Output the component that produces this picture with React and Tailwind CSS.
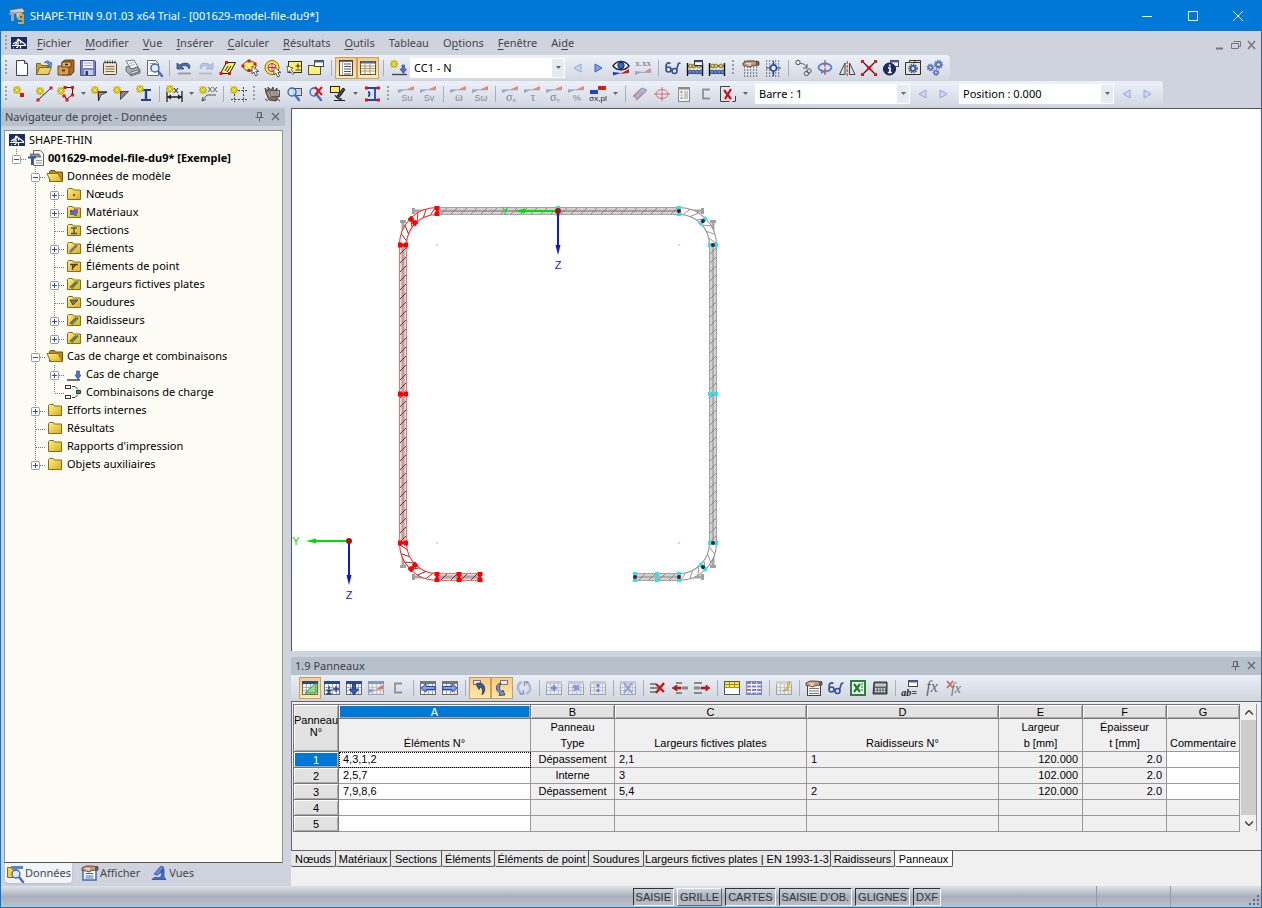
// src/App.jsx
import React, { useState } from 'react';
import clsx from 'clsx';

/* ---------- small drawing helpers (all icons live in a 20x20 box) ---------- */

const Star = ({ x = 5, y = 5 }) => (
    <g transform={`translate(${x} ${y})`} fill="none">
        <path d="M0-4V4M-4 0H4M-3-3L3 3M-3 3L3-3" stroke="#a39612" strokeWidth="1.8" />
        <path d="M0-4V4M-4 0H4M-3-3L3 3M-3 3L3-3" stroke="#fff03a" strokeWidth="0.9" />
    </g>
);

const RedDot = ({ x, y, s = 3 }) => <rect x={x - s / 2} y={y - s / 2} width={s} height={s} fill="#e01515" />;

const Cursor = ({ x = 10, y = 8 }) => (
    <path d={`M${x} ${y}v8l2-2 1.6 4 2-1-1.8-3.6h3z`} fill="#fff" stroke="#333" strokeWidth="0.8" />
);

const Lens = ({ x = 9, y = 8 }) => (
    <g>
        <path d={`M${x + 3} ${y + 3}l4 5`} stroke="#4a6fb5" strokeWidth="2.500" strokeLinecap="round" />
        <circle cx={x} cy={y} r="4" fill="#d5e6fa" fillOpacity="0.8" stroke="#3a62b0" strokeWidth="1.3" />
    </g>
);

const Wedge = () => (
    <g opacity="0.7">
        <path d="M2 9V5.500h8z" fill="#6f8fd0" />
        <path d="M18 2v4H9z" fill="#e0605a" />
        <path d="M2 6h16" stroke="#999" strokeWidth="0.7" />
    </g>
);

const ResultMark = ({ text, serif }) => (
    <g>
        <Wedge />
        <text
            x="11"
            y="17"
            textAnchor="middle"
            fontSize={serif ? 12 : 9}
            fill="#85898f"
            fontFamily={serif ? 'Liberation Serif, serif' : 'Liberation Sans, sans-serif'}
        >
            {text}
        </text>
    </g>
);

const Sheet = ({ head = '#2b4a80', soft }) => (
    <g opacity={soft ? 0.5 : 1}>
        <rect x="2.500" y="3.500" width="15" height="13" fill="#f4f4f4" stroke="#6a6a6a" />
        <rect x="2" y="3" width="16" height="3" fill={head} />
        <path d="M3 9.500h14M3 12.500h14M6.500 6v10M10.500 6v10M14.500 6v10" stroke="#9a9da5" strokeWidth="0.8" />
    </g>
);

const DotGrid = () => (
    <path
        d="M3 3h15M3 6h15M3 9h15M3 12h15M3 15h15M3 18h15"
        stroke="#333"
        strokeWidth="1.2"
        strokeDasharray="1.200 1.800"
    />
);

const Gear = ({ x, y, r, fill = '#5b7fc4' }) => (
    <g>
        <circle cx={x} cy={y} r={r} fill="none" stroke={fill} strokeWidth="1.8" strokeDasharray="1.300 1" />
        <circle cx={x} cy={y} r={r - 0.8} fill={fill} stroke="#2f4e8f" strokeWidth="0.6" />
        <circle cx={x} cy={y} r={r * 0.35} fill="#eef" />
    </g>
);

const Abacus = () => (
    <g>
        <path d="M2.500 5v13M17.500 5v13" stroke="#111" strokeWidth="1.4" />
        <path d="M2 8h16M2 15h16" stroke="#111" />
        <g fill="#e5c74d" stroke="#554400" strokeWidth="0.6">
            <circle cx="5.500" cy="8" r="1.900" />
            <circle cx="9" cy="8" r="1.900" />
            <circle cx="14" cy="8" r="1.900" />
        </g>
        <g fill="#6787cf" stroke="#1b2f66" strokeWidth="0.6">
            <circle cx="5" cy="14" r="1.900" />
            <circle cx="8.500" cy="14" r="1.900" />
            <circle cx="12" cy="14" r="1.900" />
            <circle cx="15.500" cy="14" r="1.900" />
        </g>
    </g>
);

const Glasses = () => (
    <g fill="none" stroke="#34508f" strokeWidth="1.6">
        <circle cx="5.500" cy="11.500" r="2.500" />
        <circle cx="11.500" cy="13" r="2.500" />
        <path d="M8 12h1.500M3.500 10C2 6 5 4 7.500 5.500M13.500 11.500L15.500 5.500l2-.5" />
    </g>
);

const Hand = ({ y = 0 }) => (
    <g transform={`translate(0 ${y})`}>
        <path d="M2 4l4-2 6 0 6 1v3l-6 .500-3 1.500-3-1-4-.500z" fill="#c99a75" stroke="#4a3324" strokeWidth="0.8" />
        <path d="M15 2h3v4.500h-3z" fill="#5a5a5a" />
        <path d="M5 4.500h5M6 6h4" stroke="#fbe3cf" />
    </g>
);

const Arrow = ({ left, soft }) => (
    <path
        d={left ? 'M14 6v8L7 10z' : 'M6 6v8l7-4z'}
        fill={soft ? '#c9d8f5' : '#7ba3e8'}
        stroke={soft ? '#93a8d6' : '#3d64b8'}
    />
);

const Section = () => (
    <path d="M14 5.500H7v9h7" fill="none" stroke="#8f9298" strokeWidth="1.800" />
);

const Logo = () => (
    <g>
        <rect x="2" y="4" width="16" height="12" fill="#1b2a6b" />
        <path d="M3 12.500h14M6.500 12.500L9 6v8M9 6l8 6M4 15h1M7 14.500h2M11.500 13v2.500M11.500 8.500v2M4 11l3-2" stroke="#fff" strokeWidth="1.200" fill="none" />
    </g>
);

const Plus = ({ x, y, r = 3 }) => (
    <path d={`M${x - r} ${y}h${2 * r}M${x} ${y - r}v${2 * r}`} stroke="#6f8fd8" strokeWidth="2.400" />
);

const icons = {
    logo: <Logo />,
    new: (
        <g>
            <path d="M4.500 2.500h8l3 3v12h-11z" fill="#fff" stroke="#444" />
            <path d="M12.500 2.500v3h3" fill="#ddd" stroke="#444" />
        </g>
    ),
    open: (
        <g>
            <path d="M2.500 16.500v-11h4l1.500 2h7v9z" fill="#c9a32c" stroke="#6b5512" strokeWidth="0.800" />
            <path d="M2.500 16.500l3-7h12l-3 7z" fill="#e8cf6a" stroke="#6b5512" strokeWidth="0.800" />
            <path d="M10 5c2-3 5-3 6 0l1.500-1v4.500h-4.500L14.500 7C14 5 12 4 10 5z" fill="#5b8bd8" stroke="#2a4f94" strokeWidth="0.5" />
        </g>
    ),
    archive: (
        <g stroke="#4b2f0e" strokeWidth="0.8">
            <path d="M6 4l3-2h9v12l-3 3H6z" fill="#a96c28" />
            <path d="M2 8h11v9H2z" fill="#d99b44" />
            <path d="M6 4h9v5H6z" fill="#e6b162" />
            <path d="M6 12.500h3M9 6.500h3" stroke="#3a2206" strokeWidth="1.5" />
        </g>
    ),
    save: (
        <g>
            <path d="M2.500 2.500h14l1 1v14h-15z" fill="#7a80c0" stroke="#4c5090" />
            <path d="M5 3h10v7H5z" fill="#f3f3f8" />
            <path d="M6 5h8M6 7.500h8" stroke="#aab" />
            <path d="M6 12h9v5H6z" fill="#c8ccd8" />
            <path d="M7.500 13h2.500v4H7.500z" fill="#333a66" />
        </g>
    ),
    notes: (
        <g>
            <rect x="3.500" y="4.500" width="13" height="12" rx="1" fill="#f3e6cf" stroke="#5a4a35" />
            <path d="M5.500 8.500h9M5.500 11h9M5.500 13.500h9" stroke="#7b6a52" />
            <path d="M5 2.500v3M7.500 2.500v3M10 2.500v3M12.500 2.500v3M15 2.500v3" stroke="#444" />
        </g>
    ),
    print: (
        <g stroke="#555" strokeWidth="0.8">
            <path d="M4 3l8-1 4 7-7 2z" fill="#fff" />
            <path d="M4 9l3-1 2 3 7-2 2 3v3l-9 3-5-5z" fill="#a9adbb" />
            <path d="M9 14l8-2.500v2L9 16.500z" fill="#dfe3f5" />
            <path d="M7 5.500l5-1M8 7.500l5-1" stroke="#7b8ed0" />
        </g>
    ),
    preview: (
        <g>
            <path d="M3.500 2.500h8l3 3v12h-11z" fill="#fff" stroke="#666" />
            <path d="M5.500 5.500h5M5.500 8h2M5.500 10.500h2M5.500 13h2" stroke="#999" />
            <Lens x={11} y={10} />
        </g>
    ),
    undo: (
        <g>
            <path d="M3 5v6h7L7.500 8.500C11 6.500 14 8 15 11c3-4-2-8.500-9.500-4z" fill="#4a6fb5" stroke="#20365f" strokeWidth="0.7" />
            <path d="M4 15.500h13" stroke="#9aa1ad" strokeWidth="2" />
        </g>
    ),
    redo: (
        <g opacity="0.7">
            <path d="M17 5v6h-7l2.500-2.500C9 6.500 6 8 5 11c-3-4 2-8.500 9.500-4z" fill="#a9bce0" stroke="#7387ad" strokeWidth="0.7" />
            <path d="M3 15.500h13" stroke="#aab0bb" strokeWidth="2" />
        </g>
    ),
    selPara: (
        <g>
            <path d="M8.500 4.500h9l-6 11h-9z" fill="#ffee66" stroke="#222" />
            <RedDot x={8.5} y={4.5} />
            <RedDot x={3} y={15.5} />
            <RedDot x={11.5} y={15.5} />
            <path d="M10 8l-3 5M13 8l-4 6" stroke="#222" />
        </g>
    ),
    selLasso: (
        <g>
            <ellipse cx="9.500" cy="8" rx="6.500" ry="5" fill="#ffee66" stroke="#555" />
            <RedDot x={3} y={8} />
            <RedDot x={9} y={3} />
            <RedDot x={15} y={6} />
            <RedDot x={9} y={12.5} />
            <Cursor x={12} y={8} />
        </g>
    ),
    selCircle: (
        <g>
            <circle cx="10" cy="9.500" r="7" fill="#ffe84a" stroke="#807000" />
            <circle cx="10" cy="9.500" r="4" fill="#fff" stroke="#d02020" />
            <path d="M10 6v7M6.500 9.500h7" stroke="#d02020" />
            <Cursor x={12} y={9} />
        </g>
    ),
    selPlus: (
        <g>
            <rect x="4.500" y="3.500" width="13" height="11" fill="#ffee66" stroke="#333" />
            <path d="M11.500 8h5M14 5.500v5M11.500 12h5" stroke="#333" />
            <path d="M3 8l6 2-2 1.500 3 4-1.500 1-3-4L4 15z" fill="#fff" stroke="#444" strokeWidth="0.8" />
        </g>
    ),
    windowNew: (
        <g>
            <rect x="2.500" y="7.500" width="12" height="9" fill="#ffee77" stroke="#555" />
            <rect x="8.500" y="2.500" width="9" height="6" fill="#fff" stroke="#444" />
            <path d="M8 3.500h10" stroke="#4b6390" strokeWidth="2" />
        </g>
    ),
    navPanel: (
        <g>
            <rect x="3.500" y="2.500" width="13" height="15" fill="#fff" stroke="#444" />
            <path d="M4 3h12" stroke="#444" strokeWidth="1.500" />
            <path d="M6.500 3v14" stroke="#888" strokeWidth="0.800" />
            <path d="M8 6h7M8 8.500h7M8 11h7M8 13.500h7M8 16h7" stroke="#555" />
        </g>
    ),
    tablePanel: (
        <g>
            <rect x="2.500" y="3.500" width="15" height="13" fill="#fffdf4" stroke="#555" />
            <path d="M3 4.500h14" stroke="#46669c" strokeWidth="2" />
            <path d="M3 8h14M3 10.500h14M3 13h14M7 6v10M12 6v10" stroke="#a08a5a" strokeWidth="0.9" />
        </g>
    ),
    loadNew: (
        <g>
            <Star x={6} y={6} />
            <path d="M14 7v4h-2l3.500 4.500 3-4.500h-2V7z" fill="#4a74cc" stroke="#2a4688" strokeWidth="0.6" />
            <path d="M4 16.500h15" stroke="#444" strokeWidth="1.400" />
        </g>
    ),
    prev: <Arrow left soft />,
    next: <Arrow />,
    nextSoft: <Arrow soft />,
    eye: (
        <g>
            <path d="M2 8c4-6 12-6 16 0-4 5-12 5-16 0z" fill="#fff" stroke="#1b2b55" strokeWidth="1.500" />
            <circle cx="10" cy="7.500" r="3.200" fill="#3e68b8" stroke="#132452" />
            <path d="M2 17.500v-3.500l8 1z" fill="#1c3fc4" />
            <path d="M18 11v4l-9 1z" fill="#d81414" />
        </g>
    ),
    values: (
        <g>
            <text x="10" y="8" textAnchor="middle" fontSize="9" fill="#666" fontFamily="Liberation Serif, serif">
                x.xx
            </text>
            <path d="M2 17v-4l8 1z" fill="#8aa5dd" />
            <path d="M18 10v4l-9 1z" fill="#e58c88" />
            <path d="M2 14.500h16" stroke="#aaa" />
        </g>
    ),
    glasses: <Glasses />,
    abacusDoc: (
        <g>
            <Abacus />
            <rect x="9.500" y="2.500" width="8" height="5" fill="#fff" stroke="#333" />
            <path d="M9.500 3.500h8" stroke="#3557a0" strokeWidth="1.500" />
        </g>
    ),
    abacus: <Abacus />,
    gridHand: (
        <g>
            <DotGrid />
            <Hand y={1} />
        </g>
    ),
    gridSnap: (
        <g>
            <DotGrid />
            <path d="M10.500 3v15M3 10h15" stroke="#2344a8" strokeWidth="1.200" />
            <circle cx="10.500" cy="10" r="3" fill="#e6eefc" stroke="#2344a8" strokeWidth="1.500" />
        </g>
    ),
    copyMove: (
        <g fill="none" stroke="#555">
            <circle cx="5" cy="4.500" r="2.200" />
            <path d="M7.500 5.500c3 0 5 1 6 4M14 6v4h-4" />
            <circle cx="16" cy="13" r="2.200" />
            <circle cx="13.500" cy="15.500" r="2.200" />
        </g>
    ),
    rotate: (
        <g fill="none">
            <ellipse cx="10" cy="9.500" rx="6.500" ry="4" stroke="#5a82cc" strokeWidth="1.800" />
            <path d="M10 2v16" stroke="#c02020" strokeDasharray="3 1" />
            <path d="M6 16v-5l4 2.500z" fill="#5a82cc" />
        </g>
    ),
    mirror: (
        <g fill="none" stroke="#444">
            <path d="M8 5V16.500H2.500z" />
            <path d="M12.500 5V16.500H18z" />
            <path d="M10.200 3v15" stroke="#d02020" strokeDasharray="3 1" />
        </g>
    ),
    divide: (
        <g>
            <path d="M3 3l14 14M17 3L3 17" stroke="#222" strokeWidth="1.200" />
            <path d="M7 7l6 6M13 7l-6 6" stroke="#d01515" strokeWidth="1.500" />
            <RedDot x={3.5} y={3.5} />
            <RedDot x={16.5} y={3.5} />
            <RedDot x={3.5} y={16.5} />
            <RedDot x={16.5} y={16.5} />
            <RedDot x={10} y={10} s={4} />
        </g>
    ),
    info: (
        <g>
            <rect x="9.500" y="2.500" width="8" height="6" fill="#fff" stroke="#444" />
            <path d="M9 3.500h9" stroke="#4b6390" strokeWidth="2" />
            <circle cx="8.500" cy="11" r="6" fill="#1c2c66" stroke="#0e1840" />
            <path d="M8.700 6.500v2M7 10h2v4.500M6.800 14.500h4" stroke="#fff" strokeWidth="1.700" />
        </g>
    ),
    options: (
        <g>
            <path d="M2.500 16.500v-12h4v-2h11v14z" fill="#efe3cc" stroke="#333" />
            <path d="M7 4.500h10M12 2.500v2" stroke="#333" />
            <Gear x={10} y={10.5} r={4} fill="#3d62a8" />
        </g>
    ),
    gears: (
        <g>
            <Gear x={5.5} y={9.5} r={3} />
            <Gear x={13.5} y={6.5} r={3.8} />
            <Gear x={11} y={14.5} r={2.6} />
        </g>
    ),
    nodeNew: (
        <g>
            <Star x={5} y={6} />
            <RedDot x={10} y={11} s={4} />
        </g>
    ),
    lineNew: (
        <g>
            <path d="M4 16L17 4" stroke="#222" />
            <Star x={6} y={7} />
            <RedDot x={17} y={4} />
            <RedDot x={4} y={16} />
        </g>
    ),
    polyNew: (
        <g>
            <path d="M8 3.500h8.500v7l-6 5-2-4" stroke="#222" fill="none" />
            <Star x={5} y={7} />
            <RedDot x={9} y={3.5} />
            <RedDot x={16.5} y={3.5} />
            <RedDot x={16.5} y={11} />
            <RedDot x={11} y={16} />
            <RedDot x={8} y={12} />
        </g>
    ),
    weldNew: (
        <g>
            <path d="M8 8h9l-6 3-2.500 6z" fill="#999" stroke="#333" strokeWidth="0.800" />
            <path d="M5 8h12M8.500 8v9" stroke="#222" />
            <Star x={5} y={6} />
            <RedDot x={8.5} y={8} s={2} />
        </g>
    ),
    pointNew: (
        <g>
            <path d="M8.500 7.500h8l-8 8z" fill="#888" stroke="#333" strokeWidth="0.800" />
            <Star x={5} y={6} />
            <RedDot x={9} y={8} s={2} />
        </g>
    ),
    sectionNew: (
        <g>
            <path d="M7 6h10M7 16h10" stroke="#2140a0" strokeWidth="2" />
            <path d="M12 6v10" stroke="#2140a0" strokeWidth="2.400" />
            <Star x={6} y={5} />
        </g>
    ),
    dimNew: (
        <g>
            <path d="M3 7v11M18 7v11M3 13h15" stroke="#222" strokeWidth="1.300" />
            <path d="M3 13l4-2.500v5zM18 13l-4-2.500v5z" fill="#222" />
            <path d="M10 4l4 5M14 4l-4 5" stroke="#222" />
            <Star x={6} y={5} />
        </g>
    ),
    commentNew: (
        <g>
            <path d="M4 17l5-6h9M4 17l1-4M4 17l4-1.500" stroke="#555" fill="none" />
            <path d="M10 3l4 5M14 3l-4 5M15 3l4 5M19 3l-4 5" stroke="#666" />
            <Star x={5} y={6} />
        </g>
    ),
    guideNew: (
        <g>
            <path d="M6.500 3v15M15.500 3v15M3 6.500h16M3 15.500h16" stroke="#333" strokeDasharray="2 1.500" strokeWidth="0.900" />
            <Star x={6} y={6} />
        </g>
    ),
    grab: (
        <g>
            <path d="M4 9L3 4l3 3V3l3 3 2-3 1 4 3-3v4l2 3-3 6-7-1z" fill="#85705f" stroke="#3c3028" strokeWidth="0.800" />
            <rect x="9.500" y="6.500" width="8" height="6" fill="#b5b5b5" fillOpacity="0.500" stroke="#555" />
            <path d="M6 8l2 5M9 7l1 5" stroke="#c9b19e" />
            <path d="M3 15l3 2M15 15l3 2" stroke="#444" />
        </g>
    ),
    zoomWin: (
        <g>
            <rect x="9.500" y="4.500" width="8" height="7" fill="#cfd6e4" stroke="#555" />
            <Lens x={8} y={8} />
        </g>
    ),
    zoomOff: (
        <g>
            <Lens x={8} y={8} />
            <path d="M9 3l7 8M16 3l-7 8" stroke="#d01a1a" strokeWidth="2" />
        </g>
    ),
    viewScope: (
        <g>
            <rect x="2.500" y="2.500" width="9" height="6" fill="#ffee55" stroke="#222" />
            <path d="M9 12l6-8 2 1.500-5 7zM6 16.500h11M7 11c1 3 4 5 7 4" stroke="#222" fill="#444" />
        </g>
    ),
    sectionBlue: (
        <g>
            <path d="M5 4h11M5 16h11M13 4v12M6 8c2 0 2 4 0 4" fill="none" stroke="#2342b4" strokeWidth="1.800" />
            <RedDot x={4.5} y={4} />
            <RedDot x={16.5} y={4} />
            <RedDot x={4.5} y={16} />
            <RedDot x={16.5} y={16} />
        </g>
    ),
    su: <ResultMark text="Su" />,
    sv: <ResultMark text="Sv" />,
    omega: <ResultMark text="ω" serif />,
    somega: <ResultMark text="Sω" />,
    sigx: <ResultMark text="σₓ" serif />,
    tau: <ResultMark text="τ" serif />,
    sigv: <ResultMark text="σᵥ" serif />,
    pct: <ResultMark text="%" />,
    sigpl: (
        <g>
            <path d="M2 6h8v4H2z" fill="#1c46c4" />
            <path d="M10 2h8v4h-8z" fill="#d02418" />
            <text x="10" y="17" textAnchor="middle" fontSize="8" fill="#222" fontFamily="Liberation Sans, sans-serif">
                σx,pl
            </text>
        </g>
    ),
    bars: (
        <g opacity="0.8">
            <path d="M3 12l9-8 5 2-9 9z" fill="#8fb0e4" stroke="#6c88bd" />
            <path d="M6 16l10-9M4 12l7-7" stroke="#d66a66" strokeWidth="1.500" />
        </g>
    ),
    ellipse: (
        <g fill="none" opacity="0.75">
            <ellipse cx="10" cy="10" rx="6" ry="4.500" stroke="#c8484c" />
            <path d="M10 3v14M2 10h16" stroke="#c8484c" />
        </g>
    ),
    legend: (
        <g opacity="0.8">
            <rect x="4.500" y="3.500" width="11" height="14" fill="#f4f6fa" stroke="#777" />
            <path d="M5 4.500h10" stroke="#777" strokeWidth="2" />
            <path d="M6.500 8h2" stroke="#d66" strokeWidth="2" />
            <path d="M6.500 11h2" stroke="#cc6" strokeWidth="2" />
            <path d="M6.500 14h2" stroke="#6a6" strokeWidth="2" />
            <path d="M10 8h4M10 10h4M10 12h4M10 14h4" stroke="#888" />
        </g>
    ),
    cSection: <Section />,
    deleteSel: (
        <g>
            <path d="M17.500 12v5.500h-3M12 2.500h-9.500v15h9" fill="none" stroke="#444" />
            <path d="M6 6l7 9M13 5L7 15" stroke="#c41414" strokeWidth="2.200" />
        </g>
    ),
    tGreen: (
        <g>
            <Sheet />
            <path d="M16 5v10H5z" fill="#8fdc8a" stroke="#2a9a3a" />
        </g>
    ),
    tInsert: (
        <g>
            <Sheet />
            <path d="M7 8v6M4.500 11.500L7 14l2.500-2.500M4.500 15.500h5" stroke="#1e3d90" strokeWidth="1.300" fill="none" />
            <path d="M11 11h6M14 8v6" stroke="#1e3d90" strokeWidth="1.300" />
        </g>
    ),
    tDown: (
        <g>
            <Sheet />
            <path d="M8.500 6h3v5h3L10 17l-4.500-6h3z" fill="#3259b4" stroke="#14296a" strokeWidth="0.800" />
        </g>
    ),
    tResult: (
        <g>
            <Sheet soft />
            <path d="M3 15V11l7 1z" fill="#7d9be0" />
            <path d="M17 7v4l-8 1z" fill="#e36a66" />
        </g>
    ),
    tBack: (
        <g>
            <Sheet head="#777" />
            <path d="M3 10l5-4v2.500h9v3H8V14z" fill="#7fa4ec" stroke="#2647a0" />
        </g>
    ),
    tForward: (
        <g>
            <Sheet head="#777" />
            <path d="M17 10l-5-4v2.500H3v3h9V14z" fill="#7fa4ec" stroke="#2647a0" />
        </g>
    ),
    curveA: (
        <g>
            <rect x="3.500" y="2.500" width="7" height="4" fill="#e8ecf4" stroke="#777" />
            <path d="M8 5c7-1 9 8 4 12 1-4 1-7-2-8l-1 2.500L6 6z" fill="#3b5c98" stroke="#16284d" strokeWidth="0.700" />
        </g>
    ),
    curveB: (
        <g>
            <rect x="8.500" y="2.500" width="7" height="4" fill="#e8ecf4" stroke="#777" />
            <path d="M9 5c-6 1-6 8-1 10l-1 2.500 6-.500-2-5-1 1.500c-3-1-3-5-1-8.500z" fill="#6f93d6" stroke="#16284d" strokeWidth="0.700" />
        </g>
    ),
    refresh: (
        <g fill="none" stroke="#a9b9d8" strokeWidth="2.400">
            <path d="M8 4C2 6 3 13 8 15.500M12 16c6-2 5-10 0-11.500" />
            <path d="M5.500 16h4v-4M14.500 4h-4v4" strokeWidth="1.300" stroke="#8496bb" />
        </g>
    ),
    tAdd: (
        <g>
            <Sheet head="#aab" soft />
            <Plus x={10} y={10} />
        </g>
    ),
    tMul: (
        <g>
            <Sheet head="#aab" soft />
            <path d="M8 7l5 5M13 7l-5 6M7 9l6 2" stroke="#7f9be0" strokeWidth="2.200" />
        </g>
    ),
    tDiv: (
        <g>
            <Sheet head="#aab" soft />
            <path d="M8.500 6h3v3h-3zM8.500 11h3v3h-3z" fill="#6f8fd8" />
        </g>
    ),
    tClear: (
        <g>
            <Sheet head="#aab" soft />
            <path d="M6 5l8 10M14 5L6 15" stroke="#8b9fd0" strokeWidth="2" />
        </g>
    ),
    rowDel: (
        <g>
            <path d="M2 5h6v2H2zM2 9h8v2H2zM2 13h6v2H2z" fill="#888" />
            <path d="M8 6l8 8M16 5L8 15" stroke="#c41818" strokeWidth="2.400" />
        </g>
    ),
    rowLeft: (
        <g>
            <path d="M2 10l5-3v2h4v2H7v2z" fill="#d01a1a" stroke="#8d0c0c" strokeWidth="0.600" />
            <path d="M6 4h6v2H6zM12 8.500h6v3h-6zM6 14h6v2H6z" fill="#888" />
        </g>
    ),
    rowRight: (
        <g>
            <path d="M18 10l-4-3v2H9v2h5v2z" fill="#d01a1a" stroke="#8d0c0c" strokeWidth="0.600" />
            <path d="M2 4h8v2H2zM2 8.500h6v3H2zM2 14h8v2H2z" fill="#888" />
        </g>
    ),
    tYellow: (
        <g>
            <rect x="2.500" y="3.500" width="15" height="13" fill="#fff" stroke="#555" />
            <path d="M3 4h14v5H3z" fill="#f6e64a" />
            <path d="M3 6.500h14M3 9.500h14M7.500 4v5M12.500 4v5" stroke="#8a8000" strokeWidth="0.800" />
        </g>
    ),
    tStripes: (
        <g>
            <rect x="2.500" y="3.500" width="15" height="13" fill="#fff" stroke="#8888b0" />
            <path d="M3 5h14M3 8.500h14M3 12h14M3 15.500h14" stroke="#7a80d8" strokeWidth="2" />
            <path d="M7.500 4v12M12.500 4v12" stroke="#fff" strokeWidth="0.800" />
        </g>
    ),
    tEdit: (
        <g>
            <Sheet head="#bbb" soft />
            <path d="M14 4l-1 6-4 3 5-1 2-8z" fill="#f2dc4a" stroke="#a39a30" strokeWidth="0.700" />
        </g>
    ),
    tProps: (
        <g>
            <rect x="3.500" y="6.500" width="13" height="11" fill="#fff" stroke="#444" />
            <path d="M5 10.500h10M5 13h10M5 15.500h10" stroke="#777" />
            <Hand y={1} />
        </g>
    ),
    excel: (
        <g>
            <rect x="3" y="3" width="14" height="14" fill="#e9f5e9" stroke="#2a7f3c" strokeWidth="2" />
            <path d="M6 6l6 8M12 6l-6 8" stroke="#1f7a35" strokeWidth="2.200" />
            <path d="M13 6h2M13 9h2M13 12h2" stroke="#1f7a35" />
        </g>
    ),
    calc: (
        <g>
            <path d="M4 4h13v12H3z" fill="#5a6068" stroke="#333" />
            <path d="M5 5.500h11v3H5z" fill="#c5ccc8" />
            <path d="M5 11h11M5 13.500h11" stroke="#eee" strokeWidth="1.400" strokeDasharray="1.800 1" />
        </g>
    ),
    abEq: (
        <g>
            <rect x="8.500" y="2.500" width="9" height="6" fill="#fff" stroke="#444" />
            <path d="M8 3.500h10" stroke="#4b6390" strokeWidth="2" />
            <text x="9" y="18" textAnchor="middle" fontSize="10" fontStyle="italic" fontWeight="bold" fill="#222" fontFamily="Liberation Serif, serif">
                ab=
            </text>
        </g>
    ),
    fx: (
        <text x="10" y="14" textAnchor="middle" fontSize="16" fontStyle="italic" fill="#666" fontFamily="Liberation Serif, serif">
            fx
        </text>
    ),
    fxDel: (
        <g>
            <text x="12" y="15" textAnchor="middle" fontSize="14" fontStyle="italic" fill="#777" fontFamily="Liberation Serif, serif">
                fx
            </text>
            <path d="M3 3l6 7M9 3l-6 7" stroke="#cc6a6a" strokeWidth="1.800" />
        </g>
    ),
    tabData: (
        <g>
            <rect x="6" y="3" width="12" height="3" fill="#4a86e0" />
            <path d="M2.500 14.500v-10h4l1 2h4v8z" fill="#f5cf3f" stroke="#8a6d10" />
            <path d="M8 6.500h9v7H8z" fill="#fff" opacity="0.800" />
            <Lens x={11} y={11} />
        </g>
    ),
    tabShow: (
        <g>
            <rect x="3" y="5" width="13" height="12" fill="#fff" stroke="#3a68c0" strokeWidth="1.500" />
            <path d="M5.500 10.500h8M5.500 13h8M5.500 15h8" stroke="#3a68c0" />
            <Hand y={1} />
        </g>
    ),
    tabViews: (
        <g>
            <path d="M5 11l7-8 3 1.500-6 8z" fill="#5f8ae2" stroke="#22418c" strokeWidth="0.700" />
            <path d="M12 8l3-2v8l2 2.500H3l2-2h7z" fill="#3f6fd0" stroke="#22418c" strokeWidth="0.700" />
            <path d="M8 14l4-3" stroke="#dce8ff" strokeWidth="1.200" />
        </g>
    ),
    folder: (
        <path d="M3.500 15.500V5.500l1-1h4l1 1.500h7v9.500z" fill="url(#gold)" stroke="#8a6d10" />
    ),
    folderOpen: (
        <g>
            <path d="M4.500 15.500V5.500l1-1h4l1 1.500h7v9.500z" fill="#b98c14" stroke="#6d540a" />
            <path d="M5.500 15.500l-3.500-8h11l4.500 8z" fill="url(#gold)" stroke="#8a6d10" />
        </g>
    ),
    project: (
        <g>
            <path d="M7.500 2.500h7l3 3v12h-10z" fill="#f4f4f4" stroke="#666" />
            <path d="M10 12.500h6M10 15h6" stroke="#999" />
            <path d="M4 6h9l2 3H5z" fill="#8a8f98" stroke="#555" strokeWidth="0.700" />
            <path d="M2 9.500h8M6 9.500V17" stroke="#2b55a8" strokeWidth="2" />
        </g>
    ),
    loadCase: (
        <g>
            <path d="M3 16h13" stroke="#444" strokeWidth="1.500" />
            <path d="M12.500 7v4H11l3 4.500 3-4.500h-1.500V7z" fill="#4a74cc" stroke="#2a4688" strokeWidth="0.600" />
        </g>
    ),
    loadCombo: (
        <g fill="none" stroke="#333">
            <rect x="1.500" y="3.500" width="5" height="3" fill="#fff" />
            <rect x="1.500" y="13.500" width="5" height="3" fill="#fff" />
            <path d="M8 4.500h3l3 3M8 15.500h3l3-3" />
            <path d="M12.500 8.500h4v3h-4z" fill="#22b14c" />
        </g>
    ),
};

// marks drawn on top of the closed folder in the tree
const folderMarks = {
    node: <RedDot x={10} y={11} s={2} />,
    material: (
        <g>
            <path d="M6 8h4v5H6z" fill="#2b7fd0" />
            <path d="M10 7h4v4h-4z" fill="#a44ac0" />
            <path d="M10 11h3v3h-3z" fill="#2ba04a" />
            <path d="M6 8h2v2H6z" fill="#d22" />
        </g>
    ),
    section: <path d="M7 8h6M7 13.500h6M10 8v5" stroke="#555" strokeWidth="1.500" />,
    element: <path d="M6 14l7-7" stroke="#777" strokeWidth="2.500" />,
    point: <path d="M6 8.500h8M8.500 8v6M8.500 12l3-3" stroke="#5a3a10" strokeWidth="1.300" fill="none" />,
    weld: <path d="M6 8h8l-5 5z" fill="#777" stroke="#333" strokeWidth="0.800" />,
    plate: (
        <g>
            <path d="M6 13.500l6-6" stroke="#c33" strokeWidth="1.500" />
            <path d="M7.500 14.500l6.500-7" stroke="#2f9a4a" strokeWidth="2" />
        </g>
    ),
};

function Icon({ name, mark }) {
    return (
        <svg viewBox="0 0 20 20" className="size-5 shrink-0" aria-hidden="true">
            {icons[name]}
            {mark && folderMarks[mark]}
        </svg>
    );
}

/* ---------- toolbars ---------- */

const Grip = ({ className = 'mx-1' }) => (
    <span
        className={clsx(
            'my-auto h-4 w-1 shrink-0 bg-[repeating-linear-gradient(to_bottom,#9aa0ab_0_2px,transparent_2px_4px)] bg-[length:2px_100%] bg-no-repeat',
            className
        )}
    />
);

const Caret = () => (
    <svg viewBox="0 0 5 3" className="h-[3px] w-[5px]" aria-hidden="true">
        <path d="M0 0h5L2.500 3z" fill="#666" />
    </svg>
);

function Combo({ label, value, className }) {
    return (
        <label className={clsx('relative mr-px flex h-5 w-[155px] shrink-0 items-center bg-white', className)}>
            <select aria-label={label} className="h-full w-full appearance-none bg-white pl-1 text-black outline-none">
                <option>{value}</option>
            </select>
            <span className="pointer-events-none absolute inset-y-px right-px flex w-3 items-center justify-center bg-[#e6eaf2]">
                <Caret />
            </span>
        </label>
    );
}

// '|' is a separator, '::' a grip, 'v' a drop-down arrow, '*' in front marks a pressed button
function Tools({ items }) {
    return items.map((item, i) => {
        if (item === '|') {
            return (
                <span key={i} className="flex h-4 w-2 shrink-0 justify-center">
                    <span className="w-px bg-[#a9b0bd]" />
                </span>
            );
        }
        if (item === '::') return <Grip key={i} />;
        if (item === 'v') {
            return (
                <button key={i} type="button" aria-label="Plus" className="flex h-5 w-3 shrink-0 items-center justify-center">
                    <Caret />
                </button>
            );
        }
        if (typeof item !== 'string') return React.cloneElement(item, { key: i });
        const pressed = item[0] === '*';
        const name = pressed ? item.slice(1) : item;
        return (
            <button
                key={i}
                type="button"
                aria-label={name}
                className={clsx(
                    'flex size-[22px] shrink-0 items-center justify-center',
                    pressed && 'border border-[#c2a06a] bg-linear-to-b from-[#fbc97c] to-[#ffe9a8]'
                )}
            >
                <Icon name={name} />
            </button>
        );
    });
}

const mainTools = [
    'new', 'open', 'archive', 'save', 'notes', 'print', 'preview', '|',
    'undo', 'redo', 'selPara', 'selLasso', 'selCircle', 'selPlus', 'windowNew', '|',
    '*navPanel', '*tablePanel', '|', 'loadNew',
    <Combo label="Cas de charge" value="CC1 - N" className="ml-px" />,
    'prev', 'next', 'eye', 'values', '|', 'glasses', 'abacusDoc', 'abacus', '::',
    'gridHand', 'gridSnap', '|', 'copyMove', 'rotate', 'mirror', 'divide', 'info', 'options', 'gears',
];

const editTools = [
    'nodeNew', 'lineNew', 'polyNew', 'v', 'weldNew', 'pointNew', 'sectionNew', '|',
    'dimNew', 'v', 'commentNew', '|', 'guideNew', '::',
    'grab', 'zoomWin', 'zoomOff', 'viewScope', 'v', 'sectionBlue', '::',
    'su', 'sv', '|', 'omega', 'somega', '|', 'sigx', 'tau', 'sigv', 'pct', 'sigpl', 'v', '|',
    'bars', 'ellipse', 'legend', 'cSection', 'deleteSel', 'v',
    <Combo label="Barre" value="Barre : 1" className="ml-1" />,
    'prev', 'nextSoft',
    <Combo label="Position" value="Position : 0.000" className="ml-1" />,
    'prev', 'nextSoft',
];

const tableTools = [
    '*tGreen', 'tInsert', 'tDown', 'tResult', 'cSection', '|', 'tBack', 'tForward', '|',
    '*curveA', '*curveB', 'refresh', '|', 'tAdd', 'tMul', 'tDiv', '|', 'tClear', '|',
    'rowDel', 'rowLeft', 'rowRight', '|', 'tYellow', 'tStripes', '|', 'tEdit', '|',
    'tProps', 'glasses', 'excel', 'calc', '|', 'abEq', 'fx', 'fxDel',
];

function ToolbarRow({ items }) {
    return (
        <div className="flex h-[26px]">
            <div className="flex h-[25px] items-center rounded-r bg-linear-to-b from-[#edf1f8] to-[#d3d8e2] pr-1">
                <Grip className="mr-0.5 ml-1" />
                <Tools items={items} />
            </div>
        </div>
    );
}

/* ---------- title and menu ---------- */

function TitleBar() {
    return (
        <header className="flex h-[30px] items-center bg-[#0078d7] text-white">
            <svg viewBox="0 0 18 18" className="mr-1 ml-[7px] size-[18px]" aria-hidden="true">
                <path d="M1 3l13-2 3 3-3 2H3z" fill="#c9ced6" stroke="#555" strokeWidth="0.700" />
                <path d="M2 5h6v2H6v7H3V8H1z" fill="#9fa4ac" />
                <path d="M8 6h6v2l-2 1v4l-3-2z" fill="#dfe2e7" stroke="#777" strokeWidth="0.500" />
                <path d="M15 8h-4v4h4zM15 7v9h-5" fill="none" stroke="#d9a637" strokeWidth="1.800" />
            </svg>
            <h1 className="flex-1 truncate">SHAPE-THIN 9.01.03 x64 Trial - [001629-model-file-du9*]</h1>
            <button type="button" aria-label="Réduire" className="flex h-full w-[46px] items-center justify-center">
                <svg viewBox="0 0 10 10" className="size-[10px]"><path d="M0 5.500h10" stroke="#fff" /></svg>
            </button>
            <button type="button" aria-label="Agrandir" className="flex h-full w-[45px] items-center justify-center">
                <svg viewBox="0 0 10 10" className="size-[10px]"><path d="M.500.500h9v9h-9z" stroke="#fff" fill="none" /></svg>
            </button>
            <button type="button" aria-label="Fermer" className="flex h-full w-[46px] items-center justify-center">
                <svg viewBox="0 0 10 10" className="size-[10px]"><path d="M0 0l10 10M10 0L0 10" stroke="#fff" /></svg>
            </button>
        </header>
    );
}

// [before, underlined letter, after]
const menus = [
    ['', 'F', 'ichier'],
    ['', 'M', 'odifier'],
    ['', 'V', 'ue'],
    ['', 'I', 'nsérer'],
    ['', 'C', 'alculer'],
    ['', 'R', 'ésultats'],
    ['', 'O', 'utils'],
    ['Tableau', '', ''],
    ['O', 'p', 'tions'],
    ['', 'F', 'enêtre'],
    ['Ai', 'd', 'e'],
];

function MenuBar() {
    return (
        <nav className="flex h-6 items-center text-[#45474c]">
            <Grip className="mr-0 ml-1" />
            <Icon name="logo" />
            <div className="ml-2 flex flex-1 gap-[14px]">
                {menus.map(([a, b, c]) => (
                    <button key={a + b + c} type="button">
                        {a}
                        <span className="underline underline-offset-2">{b}</span>
                        {c}
                    </button>
                ))}
            </div>
            <svg viewBox="0 0 42 12" className="mt-1 mr-1 h-3 w-[42px]" aria-hidden="true" fill="none" stroke="#777">
                <path d="M1 9.500h7" strokeWidth="2" />
                <path d="M18.500 2.500h7v5h-2M16.500 4.500h7v5h-7z" />
                <path d="M33 2l7 8M40 2l-7 8" strokeWidth="1.500" />
            </svg>
        </nav>
    );
}

function PanelHead({ title }) {
    return (
        <div className="flex h-[18px] items-center bg-[#b8c0cb] px-1 text-[#3c4047]">
            <h2 className="flex-1">{title}</h2>
            <svg viewBox="0 0 28 12" className="h-3 w-7" aria-hidden="true" fill="none" stroke="#666">
                <path d="M4.500 1.500h4v5h-4zM2.500 6.500h8M6.500 6.500v4M8 1.500v5" />
                <path d="M19 2l7 7M26 2l-7 7" strokeWidth="1.200" />
            </svg>
        </div>
    );
}

/* ---------- project navigator ---------- */

// guides: one letter per indent column. I = line, T = branch, L = last branch, space = empty
const tree = [
    { guides: '', icon: 'logo', label: 'SHAPE-THIN' },
    { guides: 'L', box: '-', icon: 'project', label: '001629-model-file-du9* [Exemple]', bold: true },
    { guides: ' T', box: '-', icon: 'folderOpen', label: 'Données de modèle' },
    { guides: ' IT', box: '+', icon: 'folder', mark: 'node', label: 'Nœuds' },
    { guides: ' IT', box: '+', icon: 'folder', mark: 'material', label: 'Matériaux' },
    { guides: ' IT', icon: 'folder', mark: 'section', label: 'Sections' },
    { guides: ' IT', box: '+', icon: 'folder', mark: 'element', label: 'Éléments' },
    { guides: ' IT', icon: 'folder', mark: 'point', label: 'Éléments de point' },
    { guides: ' IT', box: '+', icon: 'folder', mark: 'plate', label: 'Largeurs fictives plates' },
    { guides: ' IT', icon: 'folder', mark: 'weld', label: 'Soudures' },
    { guides: ' IT', box: '+', icon: 'folder', mark: 'plate', label: 'Raidisseurs' },
    { guides: ' IL', box: '+', icon: 'folder', mark: 'plate', label: 'Panneaux' },
    { guides: ' T', box: '-', icon: 'folderOpen', label: 'Cas de charge et combinaisons' },
    { guides: ' IT', box: '+', icon: 'loadCase', label: 'Cas de charge' },
    { guides: ' IL', icon: 'loadCombo', label: 'Combinaisons de charge' },
    { guides: ' T', box: '+', icon: 'folder', label: 'Efforts internes' },
    { guides: ' T', icon: 'folder', label: 'Résultats' },
    { guides: ' T', icon: 'folder', label: "Rapports d'impression" },
    { guides: ' L', box: '+', icon: 'folder', label: 'Objets auxiliaires' },
];

function Guide({ type, box }) {
    return (
        <svg viewBox="0 0 19 18" className="h-[18px] w-[19px] shrink-0" aria-hidden="true">
            <g stroke="#777" strokeDasharray="1 1">
                {type !== ' ' && <path d={type === 'L' ? 'M9.500 0V10' : 'M9.500 0V18'} />}
                {(type === 'T' || type === 'L') && <path d="M10 10.500H19" />}
            </g>
            {box && (
                <g>
                    <rect x="5.500" y="6.500" width="8" height="8" rx="1" fill="#fff" stroke="#999" />
                    <path d={box === '+' ? 'M7 10.500h5M9.500 8v5' : 'M7 10.500h5'} stroke="#2a4fa0" />
                </g>
            )}
        </svg>
    );
}

const navTabs = [
    ['tabData', 'Données'],
    ['tabShow', 'Afficher'],
    ['tabViews', 'Vues'],
];

function Navigator() {
    const [active, setActive] = useState('Données');
    return (
        <aside className="flex w-[284px] shrink-0 flex-col">
            <PanelHead title="Navigateur de projet - Données" />
            <ul className="mt-1 mr-0.5 ml-[3px] flex-1 overflow-hidden border border-[#8e939c] border-b-[#555] bg-[#fcfbf4] pl-0.5 text-black">
                {tree.map((row) => (
                    <li key={row.label} className="flex h-[18px] items-center">
                        {[...row.guides].map((g, i) => (
                            <Guide key={i} type={g} box={i === row.guides.length - 1 && row.box} />
                        ))}
                        <Icon name={row.icon} mark={row.mark} />
                        <span className={clsx('ml-0.5', row.bold && 'font-bold')}>{row.label}</span>
                    </li>
                ))}
            </ul>
            <div role="tablist" className="ml-1 flex h-[23px] gap-2 text-[#45474c]">
                {navTabs.map(([icon, label]) => (
                    <button
                        key={label}
                        type="button"
                        role="tab"
                        aria-selected={active === label}
                        onClick={() => setActive(label)}
                        className={clsx(
                            'flex h-5 items-center rounded-b pr-px',
                            active === label && 'bg-[#f1f4f9] shadow-sm'
                        )}
                    >
                        <Icon name={icon} />
                        {label}
                    </button>
                ))}
            </div>
        </aside>
    );
}

/* ---------- section view ---------- */

const X1 = 403;
const X2 = 713;
const Y1 = 211;
const Y2 = 577;
const R = 34;

const range = (from, to, step) => {
    const out = [];
    for (let v = from; v < to; v += step) out.push(v);
    return out;
};

const arcHatch = (cx, cy, start) =>
    range(start + 8, start + 84, 14)
        .map((deg) => {
            const a = (deg * Math.PI) / 180;
            const b = ((deg + 9) * Math.PI) / 180;
            return `M${cx + 31 * Math.cos(a)} ${cy + 31 * Math.sin(a)}L${cx + 37 * Math.cos(b)} ${cy + 37 * Math.sin(b)}`;
        })
        .join('');

const wallHatch = (x) => range(Y1 + R + 4, Y2 - R - 4, 9).map((y) => `M${x - 3} ${y + 5}L${x + 3} ${y - 1}`).join('');
const flangeHatch = (x1, x2, y) => range(x1 + 4, x2 - 6, 10).map((x) => `M${x} ${y + 3}L${x + 6} ${y - 3}`).join('');

function Node({ x, y, color, turn = 0, dot }) {
    return (
        <g transform={`translate(${x} ${y}) rotate(${turn})`}>
            <rect x="-2" y="-5" width="4" height="4" fill={color} />
            <rect x="-2" y="1" width="4" height="4" fill={color} />
            {color === '#ff0000' && (
                <path d="M-2.500-5h5v4h-1v2h1v4h-5V1h1v-2h-1z" fill={color} />
            )}
            {dot && <circle r="2" fill="#701018" />}
        </g>
    );
}

const redNodes = [
    [437, Y1, 0], [413, 221, -45], [X1, 245, 90], [X1, 394, 90], [X1, 543, 90],
    [413, 567, 45], [437, Y2, 0], [459, Y2, 0], [480, Y2, 0],
];

const cyanNodes = [
    [558, Y1, 0], [679, Y1, 0, true], [703, 221, 45, true], [X2, 245, 90, true], [X2, 394, 90],
    [X2, 543, 90, true], [703, 567, -45, true], [679, Y2, 0, true], [657, Y2, 0], [635, Y2, 0, true],
];

function Axes({ x, y }) {
    return (
        <g fontFamily="Liberation Sans, sans-serif" fontSize="11">
            <path d={`M${x} ${y}h-34`} stroke="#00e000" strokeWidth="2" />
            <path d={`M${x - 43} ${y}l10-2.500v5z`} fill="#00e000" />
            <path d={`M${x} ${y}v34`} stroke="#1414e6" strokeWidth="2" />
            <path d={`M${x} ${y + 44}l-2.500-10h5z`} fill="#1414c8" />
            <circle cx={x} cy={y} r="3" fill="#b01010" />
            <text x={x - 53} y={y + 4} textAnchor="middle" fill="#00e000">Y</text>
            <text x={x} y={y + 58} textAnchor="middle" fill="#1414e6">Z</text>
        </g>
    );
}

function SectionView() {
    return (
        <div className="min-h-0 flex-1 border-t border-l border-[#555] bg-white">
            <svg className="block h-full w-full" role="img" aria-label="Section">
                <g transform="translate(-292 -109)" fill="none">
                    {/* grey members with their overhanging ends */}
                    <g stroke="#a8a8a8" strokeWidth="3">
                        <path d="M413 211H703M413 577H437M679 577H703M403 221V245M403 543V567M713 221V245M713 543V567" />
                    </g>
                    <g fill="#a0a0a0">
                        <path d="M412 208h3v6h-3zM701 208h3v6h-3zM412 574h3v6h-3zM701 574h3v6h-3z" />
                        <path d="M400 220h6v3h-6zM710 220h6v3h-6zM400 565h6v3h-6zM710 565h6v3h-6z" />
                    </g>

                    {/* top flange and right half */}
                    <path d="M437 211H679M713 245V543M679 577H635" stroke="#a4a4a4" strokeWidth="8" />
                    <path d="M437 211H679M713 245V543M679 577H635" stroke="#d2d2d2" strokeWidth="6" />
                    <path d="M437 211H679" stroke="#b39a9a" strokeWidth="2" />
                    <path d="M713 245V543M679 577H635" stroke="#aeaeae" strokeWidth="2" />
                    <path d="M679 211A34 34 0 0 1 713 245M713 543A34 34 0 0 1 679 577" stroke="#8c8c8c" strokeWidth="8" />
                    <path d="M679 211A34 34 0 0 1 713 245M713 543A34 34 0 0 1 679 577" stroke="#fff" strokeWidth="6" />
                    <path
                        d={flangeHatch(437, 679, Y1) + flangeHatch(635, 679, Y2) + wallHatch(X2) + arcHatch(679, 245, -90) + arcHatch(679, 543, 0)}
                        stroke="#7a7a7a"
                        strokeWidth="0.8"
                    />

                    {/* selected left half */}
                    <path d="M403 245V543M437 577H480" stroke="#ff6a6a" strokeWidth="8" />
                    <path d="M403 245V543M437 577H480" stroke="#f2d6d6" strokeWidth="6" />
                    <path d="M403 245V543M437 577H480" stroke="#ada6a6" strokeWidth="3" />
                    <path d="M437 211A34 34 0 0 0 403 245M403 543A34 34 0 0 0 437 577" stroke="#ff2020" strokeWidth="8" />
                    <path d="M437 211A34 34 0 0 0 403 245M403 543A34 34 0 0 0 437 577" stroke="#fff" strokeWidth="6" />
                    <path
                        d={flangeHatch(437, 480, Y2) + wallHatch(X1) + arcHatch(437, 245, 180) + arcHatch(437, 543, 90)}
                        stroke="#7a1c1c"
                        strokeWidth="0.9"
                    />

                    {[[437, 245], [679, 245], [437, 543], [679, 543]].map(([x, y]) => (
                        <circle key={`${x}-${y}`} cx={x} cy={y} r="1" fill="#dcc4c4" />
                    ))}
                    {redNodes.map(([x, y, turn]) => (
                        <Node key={`${x}-${y}`} x={x} y={y} turn={turn} color="#ff0000" />
                    ))}
                    {cyanNodes.map(([x, y, turn, dot]) => (
                        <Node key={`${x}-${y}`} x={x} y={y} turn={turn} dot={dot} color="#20e8f0" />
                    ))}

                    <Axes x={558} y={211} />
                    <Axes x={349} y={541} />
                </g>
            </svg>
        </div>
    );
}

/* ---------- table 1.9 ---------- */

const columns = [
    { id: 'A', lines: ['', 'Éléments N°'], width: 'w-[192px]' },
    { id: 'B', lines: ['Panneau', 'Type'], width: 'w-[84px]' },
    { id: 'C', lines: ['', 'Largeurs fictives plates'], width: 'w-[192px]' },
    { id: 'D', lines: ['', 'Raidisseurs N°'], width: 'w-[192px]' },
    { id: 'E', lines: ['Largeur', 'b [mm]'], width: 'w-[84px]' },
    { id: 'F', lines: ['Épaisseur', 't [mm]'], width: 'w-[84px]' },
    { id: 'G', lines: ['', 'Commentaire'], width: '' },
];

const rows = [
    ['4,3,1,2', 'Dépassement', '2,1', '1', '120.000', '2.0', ''],
    ['2,5,7', 'Interne', '3', '', '102.000', '2.0', ''],
    ['7,9,8,6', 'Dépassement', '5,4', '2', '120.000', '2.0', ''],
    ['', '', '', '', '', '', ''],
    ['', '', '', '', '', '', ''],
];

const cellAlign = ['text-left', 'text-center', 'text-left', 'text-left', 'text-right', 'text-right', 'text-left'];

const raised = 'border-r border-b border-[#777] shadow-[inset_1px_1px_0_#fff,inset_-1px_-1px_0_#a8a8a8]';

function DataTable() {
    return (
        <table className="w-full table-fixed border-separate border-spacing-0 border-t border-l border-[#777] text-black">
            <colgroup>
                <col className="w-[45px]" />
                {columns.map((c) => (
                    <col key={c.id} className={c.width} />
                ))}
            </colgroup>
            <thead className="font-normal">
                <tr className="h-[14px]">
                    <th rowSpan={2} className={clsx('bg-[#e2e2e2] p-0 pb-1 leading-3 font-normal', raised)}>
                        Panneau
                        <br />
                        N°
                    </th>
                    {columns.map((c) => (
                        <th
                            key={c.id}
                            className={clsx(
                                'p-0 leading-3 font-normal',
                                raised,
                                c.id === 'A' ? 'bg-[#0078d7] text-white' : 'bg-[#e2e2e2]'
                            )}
                        >
                            {c.id}
                        </th>
                    ))}
                </tr>
                <tr className="h-[33px]">
                    {columns.map((c) => (
                        <th key={c.id} className="border-r border-b border-[#999] p-0 align-top font-normal">
                            {c.lines.map((line, i) => (
                                <span key={i} className="block h-4 leading-4">{line}</span>
                            ))}
                        </th>
                    ))}
                </tr>
            </thead>
            <tbody>
                {rows.map((row, r) => (
                    <tr key={r} className="h-4">
                        <th
                            scope="row"
                            className={clsx(
                                'p-0 leading-3 font-normal',
                                raised,
                                r === 0 ? 'bg-[#0078d7] text-white' : 'bg-[#e2e2e2]'
                            )}
                        >
                            {r + 1}
                        </th>
                        {row.map((value, c) => (
                            <td
                                key={c}
                                className={clsx(
                                    'h-4 border-r border-b border-[#999] px-1 py-0 leading-[15px]',
                                    cellAlign[c],
                                    (c === 0 || (c === 6 && r < 3)) && 'bg-white',
                                    r === 0 && c === 0 && 'outline-1 -outline-offset-1 outline-dotted outline-black'
                                )}
                            >
                                {value}
                            </td>
                        ))}
                    </tr>
                ))}
            </tbody>
        </table>
    );
}

const sheetTabs = [
    ['Nœuds', 'w-[45px]'],
    ['Matériaux', 'w-[55px]'],
    ['Sections', 'w-[51px]'],
    ['Éléments', 'w-[53px]'],
    ['Éléments de point', 'w-[94px]'],
    ['Soudures', 'w-[55px]'],
    ['Largeurs fictives plates | EN 1993-1-3', 'w-[187px]'],
    ['Raidisseurs', 'w-[64px]'],
    ['Panneaux', 'w-[58px]'],
];

function TablePanel() {
    const [tab, setTab] = useState('Panneaux');
    return (
        <section className="flex shrink-0 flex-col bg-[#f0f0f0]">
            <PanelHead title="1.9 Panneaux" />
            <div className="flex h-[27px] items-center border-b border-[#666] bg-linear-to-b from-[#e9edf5] to-[#d2d6df] pl-2">
                <Tools items={tableTools} />
            </div>
            <div className="flex h-[149px] items-start border-b border-l border-[#666] pt-[2px] pr-1 pl-px font-['Liberation_Sans',Arial,sans-serif] text-[11px]">
                <DataTable />
                <div className="ml-px flex h-[127px] w-4 shrink-0 flex-col border-r border-[#999]">
                    <button type="button" aria-label="Monter" className="flex h-4 items-center justify-center">
                        <svg viewBox="0 0 8 5" className="h-[5px] w-2"><path d="M0 4.500l4-4 4 4" stroke="#444" strokeWidth="1.500" fill="none" /></svg>
                    </button>
                    <div className="flex-1 bg-[#cdcdcd]" />
                    <button type="button" aria-label="Descendre" className="flex h-4 items-center justify-center">
                        <svg viewBox="0 0 8 5" className="h-[5px] w-2"><path d="M0 .500l4 4 4-4" stroke="#444" strokeWidth="1.500" fill="none" /></svg>
                    </button>
                </div>
            </div>
            <div role="tablist" className="flex h-[35px] items-start font-['Liberation_Sans',Arial,sans-serif] text-[11px] text-black">
                {sheetTabs.map(([label, width]) => (
                    <button
                        key={label}
                        type="button"
                        role="tab"
                        aria-selected={tab === label}
                        onClick={() => setTab(label)}
                        className={clsx(
                            'flex h-4 shrink-0 items-center justify-center rounded-b-xs border-r border-b border-[#555] whitespace-nowrap',
                            width,
                            tab === label ? 'bg-white' : 'bg-[#e8e8e8]'
                        )}
                    >
                        {label}
                    </button>
                ))}
            </div>
        </section>
    );
}

/* ---------- status bar ---------- */

const modes = [
    ['SAISIE', true],
    ['GRILLE', false],
    ['CARTES', true],
    ["SAISIE D'OB.", true],
    ['GLIGNES', true],
    ['DXF', true],
];

function StatusBar() {
    return (
        <footer className="flex h-[21px] shrink-0 items-center justify-end bg-linear-to-b from-[#dfe2e8] via-[#a9b0bb] to-[#bcc2cb] font-['Liberation_Sans',Arial,sans-serif] text-[11px] text-[#333]">
            <div className="flex gap-[3px]">
                {modes.map(([label, on]) => (
                    <button
                        key={label}
                        type="button"
                        aria-pressed={on}
                        className={clsx(
                            'h-[18px] border px-0.5 leading-4',
                            on ? 'border-[#333] border-r-white border-b-white' : 'border-white border-r-[#666] border-b-[#666]'
                        )}
                    >
                        {label}
                    </button>
                ))}
            </div>
            <div className="ml-[155px] h-full w-[74px] border-l border-[#959ba6]" />
            <div className="flex h-full w-[91px] items-end justify-end border-l border-[#959ba6] p-px">
                <svg viewBox="0 0 12 12" className="size-3" aria-hidden="true">
                    <path d="M9 1h2v2H9zM5 5h2v2H5zM9 5h2v2H9zM1 9h2v2H1zM5 9h2v2H5zM9 9h2v2H9z" fill="#666b75" />
                </svg>
            </div>
        </footer>
    );
}

export default function App() {
    return (
        <div className="flex h-screen flex-col overflow-hidden border border-[#0078d7] bg-[#cfd3dd] font-['Noto_Sans','Segoe_UI',sans-serif] text-[11px] leading-4">
            <svg className="absolute size-0" aria-hidden="true">
                <defs>
                    <linearGradient id="gold" x1="0" y1="0" x2="1" y2="1">
                        <stop offset="0" stopColor="#fdf08a" />
                        <stop offset="1" stopColor="#d9ae1c" />
                    </linearGradient>
                </defs>
            </svg>
            <TitleBar />
            <MenuBar />
            <ToolbarRow items={mainTools} />
            <ToolbarRow items={editTools} />
            <main className="flex min-h-0 flex-1 gap-[6px] pt-px">
                <Navigator />
                <div className="flex min-w-0 flex-1 flex-col gap-[6px]">
                    <SectionView />
                    <TablePanel />
                </div>
            </main>
            <StatusBar />
        </div>
    );
}
